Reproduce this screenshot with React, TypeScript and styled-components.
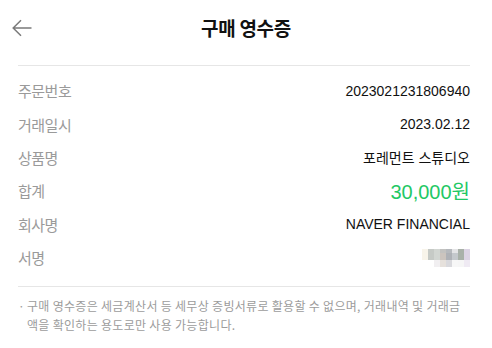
import styled, { createGlobalStyle } from 'styled-components'

const GlobalStyle = createGlobalStyle`
  html, body {
    margin: 0;
    padding: 0;
    background: #fff;
  }
  body {
    font-family: 'Liberation Sans', 'Noto Sans CJK KR', sans-serif;
    color: #111;
  }
`

type TRow = {
  label: string
  value: string
  accent?: boolean
}

const rows: TRow[] = [
  { label: '주문번호', value: '2023021231806940' },
  { label: '거래일시', value: '2023.02.12' },
  { label: '상품명', value: '포레먼트 스튜디오' },
  { label: '합계', value: '30,000원', accent: true },
  { label: '회사명', value: 'NAVER FINANCIAL' },
]

// blurred signature pixels: [x, y, w, h, fill]
const sigCells: [number, number, number, number, string][] = [
  [0, 0, 6, 11, '#f8f4ea'],
  [6, 0, 6, 11, '#c6cac6'],
  [12, 0, 6, 11, '#d2d6d2'],
  [18, 0, 6, 11, '#c2c2c0'],
  [24, 0, 6, 11, '#b6b9bd'],
  [30, 0, 6, 11, '#e4e4e6'],
  [36, 0, 6, 11, '#a9b1a9'],
  [42, 0, 6, 11, '#dcd4e4'],
  [12, 11, 6, 7, '#f1eff1'],
  [18, 11, 6, 7, '#e6e1dc'],
  [24, 11, 6, 7, '#d9d9dd'],
  [30, 11, 6, 7, '#f7f7f7'],
  [36, 11, 6, 7, '#f6f6f6'],
  [42, 11, 6, 7, '#efeaf3'],
  [18, 4, 6, 7, '#cbc4be'],
  [24, 4, 6, 7, '#aeb1b6'],
  [30, 4, 6, 7, '#c4c8cc'],
]

export default function App() {
  return (
    <Page>
      <GlobalStyle />
      <Header>
        <BackButton aria-label="뒤로">
          <svg width="20" height="18" viewBox="0 0 20 18" fill="none">
            <path
              d="M19.5 9H1.2M9 1.2L1.2 9L9 16.8"
              stroke="#7a7a7a"
              strokeWidth="1.5"
            />
          </svg>
        </BackButton>
        <Title>구매 영수증</Title>
        <span />
      </Header>
      <Body>
        <List>
          {rows.map((r) => (
            <Row key={r.label}>
              <Label>{r.label}</Label>
              <Value $accent={r.accent}>{r.value}</Value>
            </Row>
          ))}
          <Row>
            <Label>서명</Label>
            <svg width="48" height="18" viewBox="0 0 48 18">
              {sigCells.map(([x, y, w, h, f], i) => (
                <rect key={i} x={x} y={y} width={w} height={h} fill={f} />
              ))}
            </svg>
          </Row>
        </List>
        <Note>
          <Bullet>·</Bullet>
          <NoteText>
            구매 영수증은 세금계산서 등 세무상 증빙서류로 활용할 수 없으며,
            거래내역 및 거래금액을 확인하는 용도로만 사용 가능합니다.
          </NoteText>
        </Note>
      </Body>
    </Page>
  )
}

const Page = styled.div`
  width: 492px;
  height: 348px;
  background: #fff;
  overflow: hidden;
`
const Header = styled.header`
  height: 55px;
  display: grid;
  grid-template-columns: 1fr auto 1fr;
  align-items: center;
  padding: 0 12px;
`
const BackButton = styled.button`
  justify-self: start;
  display: flex;
  align-items: center;
  padding: 0;
  border: 0;
  background: none;
  cursor: pointer;
`
const Title = styled.h1`
  margin: 0;
  font-family: 'Noto Sans CJK KR', sans-serif;
  font-size: 19px;
  font-weight: 700;
  letter-spacing: -0.3px;
  color: #111;
`
const Body = styled.main`
  margin: 10px 22px 0 18px;
`
const List = styled.section`
  border-top: 1px solid #e6e6e6;
  border-bottom: 1px solid #e6e6e6;
  padding: 8px 0 12px;
`
const Row = styled.div`
  height: 33.4px;
  display: flex;
  align-items: center;
  justify-content: space-between;
`
const Label = styled.span`
  font-family: 'Noto Sans CJK KR', sans-serif;
  font-size: 15px;
  letter-spacing: -0.5px;
  color: #9a9a9a;
`
const Value = styled.span<{ $accent?: boolean }>`
  font-size: ${(p) => (p.$accent ? '20px' : '14px')};
  color: ${(p) => (p.$accent ? '#1fc865' : '#111')};
`
const Note = styled.div`
  display: flex;
  padding-top: 9px;
  font-family: 'Noto Sans CJK KR', sans-serif;
  font-size: 12px;
  line-height: 19px;
  color: #9c9c9c;
`
const Bullet = styled.span`
  width: 9px;
  flex: none;
`
const NoteText = styled.p`
  margin: 0;
  letter-spacing: 0.3px;
`
